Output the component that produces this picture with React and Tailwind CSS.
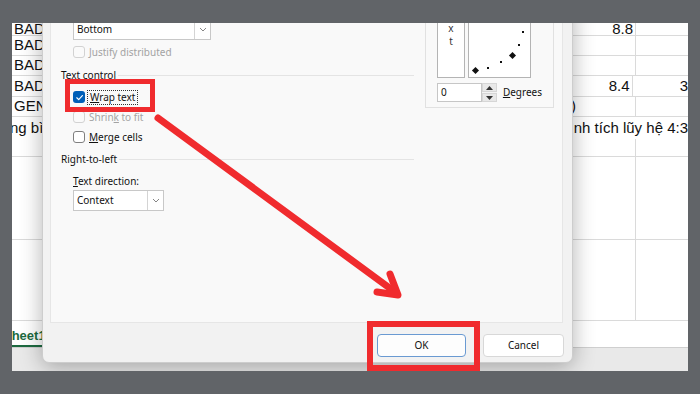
import React from 'react'

function Check({ checked, disabled }) {
  if (checked) {
    return (
      <span className="flex h-[12px] w-[12px] shrink-0 items-center justify-center rounded-[3px] bg-[#005fb8]">
        <svg width="9" height="9" viewBox="0 0 10 10">
          <path d="M2 5.3 4.1 7.3 8.2 2.8" fill="none" stroke="#fff" strokeWidth="1.3" strokeLinecap="round" strokeLinejoin="round" />
        </svg>
      </span>
    )
  }
  return <span className={`block h-[12px] w-[12px] shrink-0 rounded-[3px] border ${disabled ? 'border-[#d2d2d2] bg-[#fafafa]' : 'border-[#7f7f7f] bg-white'}`} />
}

function Select({ value, className }) {
  return (
    <div className={`flex h-[21px] border border-[#c8c8c8] bg-white ${className}`}>
      <span className="flex-1 pl-[3px] leading-[19px]">{value}</span>
      <span className="flex w-[16px] items-center justify-center border-l border-[#d4d4d4]">
        <svg width="8" height="5" viewBox="0 0 8 5"><path d="M1 1 4 4 7 1" fill="none" stroke="#777" strokeWidth="0.9" /></svg>
      </span>
    </div>
  )
}

function Group({ label }) {
  return (
    <div className="flex h-[14px] items-center leading-[14px]">
      <span>{label}</span>
      <span className="ml-[2px] h-px flex-1 bg-[#e4e4e4]" />
    </div>
  )
}

const rows = [
  { h: 'h-[13px]', a: 'BAD', c: '8.8' },
  { h: 'h-[20px]', a: 'BAD' },
  { h: 'h-[20px]', a: 'BAD' },
  { h: 'h-[21px]', a: 'BAD', c: '8.4', d: '3' },
  { h: 'h-[20px]', a: 'GEN', paren: true },
  { h: 'h-[22px]', a: 'ng bình', long: 'bình tích lũy hệ 4:3', noline: true },
  { h: 'h-[18px]' },
  { h: 'h-[83px]' },
  { h: 'h-[81px]' },
]

function Sheet() {
  return (
    <div className="flex flex-col text-[15px] text-[#111]" style={{ fontFamily: '"Liberation Sans", Arial, sans-serif' }}>
      {rows.map((r, i) => (
        <div key={i} className={`flex ${r.h} ${r.noline ? '' : 'border-b border-[#dadada]'}`}>
          <div className="flex w-[30px] items-center overflow-hidden whitespace-nowrap pl-[2px]">
            <span className={r.a === 'ng bình' ? '-ml-[4px]' : ''}>{r.a}</span>
          </div>
          <div className="w-[523px]" />
          {r.long ? (
            <div className="flex flex-1 items-center whitespace-nowrap pl-[6px]">{r.long}</div>
          ) : (
            <>
              <div className="flex w-[71px] items-center justify-end border-r border-[#dadada] pr-[2px]">
                {r.paren ? <span className="mr-auto pl-[6px]">)</span> : r.c}
              </div>
              <div className="flex flex-1 items-center whitespace-nowrap pl-[47px]">{r.d}</div>
            </>
          )}
        </div>
      ))}
      <div className="flex h-[27px] items-end border-b border-[#cfcfcf] bg-white">
        <div className="flex h-full w-[30px] flex-col justify-end overflow-hidden">
          <span className="-ml-[9px] self-start whitespace-nowrap pb-[2px] text-[13px] font-bold leading-[15px] text-[#1d6a40]">Sheet1</span>
          <span className="h-[2px] w-full bg-[#1d6a40]" />
        </div>
      </div>
      <div className="h-[23px] bg-[#e9e9e9]" />
    </div>
  )
}

function Dialog() {
  return (
    <div className="absolute left-[30px] top-[-23px] flex h-[363px] w-[531px] flex-col rounded-b-[7px] border border-[#cdcdcd] bg-[#f2f2f2] text-[10px] text-[#111] shadow-[0_4px_22px_rgba(0,0,0,0.3)]" style={{ fontFamily: '"Noto Sans", "Open Sans", sans-serif' }}>
      <div className="ml-[7px] mr-[9px] flex h-[322px] gap-[11px] border-x border-b border-[#e6e6e6] bg-[#f9f9f9]">
        <div className="flex w-[363px] flex-col pl-[10px] pt-[18px]">
          <Select value="Bottom" className="ml-[12px] w-[138px]" />
          <div className="ml-[12px] mt-[6px] flex h-[12px] items-center gap-[4px] text-[#a3a3a3]">
            <Check disabled />
            <span>Justify distributed</span>
          </div>
          <div className="mt-[10px]"><Group label="Text control" /></div>
          <div className="mt-[5px] flex flex-col">
            <div className="ml-[12px] flex h-[20px] items-center gap-[2px]">
              <Check checked />
              <span className="border border-dotted border-[#333] px-[2px] leading-[13px]"><span className="underline">W</span>rap text</span>
            </div>
            <div className="ml-[12px] flex h-[20px] items-center gap-[4px] text-[#a3a3a3]">
              <Check disabled />
              <span>Shrin<span className="underline">k</span> to fit</span>
            </div>
            <div className="ml-[12px] flex h-[20px] items-center gap-[4px]">
              <Check />
              <span><span className="underline">M</span>erge cells</span>
            </div>
          </div>
          <div className="mt-[5px]"><Group label="Right-to-left" /></div>
          <div className="ml-[12px] mt-[8px] h-[14px] leading-[14px]"><span className="underline">T</span>ext direction:</div>
          <Select value="Context" className="ml-[12px] mt-[2px] w-[91px]" />
        </div>
        <div className="flex h-[107px] w-[129px] flex-col border border-t-0 border-[#e1e1e1] px-[11px]">
          <div className="mt-[5px] flex gap-[3px]">
            <div className="flex h-[72px] w-[28px] flex-col items-center overflow-hidden border border-[#b4b4b4] bg-white leading-[13px] text-[#333]">
              <span className="-mt-[11px]">T</span>
              <span>e</span>
              <span>x</span>
              <span>t</span>
            </div>
            <div className="h-[72px] w-[63px] border border-[#b4b4b4] bg-white">
              <svg width="61" height="70" viewBox="0 0 61 70">
                <rect x="4" y="61" width="5" height="5" transform="rotate(45 6.5 63.5)" fill="#111" />
                <rect x="41" y="46" width="5" height="5" transform="rotate(45 43.5 48.5)" fill="#111" />
                <rect x="18" y="60" width="2" height="2" fill="#111" />
                <rect x="31" y="54" width="2" height="2" fill="#111" />
                <rect x="49" y="37" width="2" height="2" fill="#111" />
                <rect x="53" y="24" width="2" height="2" fill="#111" />
              </svg>
            </div>
          </div>
          <div className="mt-[5px] flex h-[19px] items-center">
            <div className="h-[19px] w-[49px] border border-[#c6c6c6] bg-white pl-[3px] leading-[17px]">0</div>
            <div className="flex h-[19px] w-[16px] flex-col gap-px bg-[#f3f3f3]">
              <div className="flex flex-1 items-center justify-center border border-[#d6d6d6] bg-[#e8e8e8]">
                <svg width="7" height="4" viewBox="0 0 7 4"><path d="M0 4 3.5 0 7 4Z" fill="#333" /></svg>
              </div>
              <div className="flex flex-1 items-center justify-center border border-[#d6d6d6] bg-[#e8e8e8]">
                <svg width="7" height="4" viewBox="0 0 7 4"><path d="M0 0 3.5 4 7 0Z" fill="#333" /></svg>
              </div>
            </div>
            <span className="ml-[6px]"><span className="underline">D</span>egrees</span>
          </div>
        </div>
      </div>
      <div className="flex flex-1 justify-end gap-[17px] pr-[8px] pt-[11px]">
        <button className="h-[23px] w-[89px] rounded-[4px] border border-[#6a9ad2] bg-[#fdfdfd]">OK</button>
        <button className="h-[23px] w-[81px] rounded-[4px] border border-[#d8d8d8] bg-white">Cancel</button>
      </div>
    </div>
  )
}

export default function App() {
  return (
    <div className="relative flex h-[394px] w-[700px] items-start overflow-hidden bg-[#616468] pl-[12px] pt-[23px]">
      <div className="relative h-[348px] w-[676px] shrink-0 overflow-hidden bg-white">
        <Sheet />
        <Dialog />
      </div>
      <div className="absolute left-[65px] top-[79px] h-[33px] w-[90px] border-[5px] border-[#f02b2e]" />
      <div className="absolute left-[367px] top-[321px] h-[50px] w-[113px] border-[6px] border-[#f02b2e]" />
      <svg className="pointer-events-none absolute left-0 top-0" width="700" height="394" viewBox="0 0 700 394">
        <line x1="158" y1="118" x2="395" y2="292" stroke="#f02b2e" strokeWidth="7" strokeLinecap="round" />
        <polyline points="377,292 398,295 390,274" fill="none" stroke="#f02b2e" strokeWidth="7" strokeLinecap="round" strokeLinejoin="round" />
      </svg>
    </div>
  )
}
